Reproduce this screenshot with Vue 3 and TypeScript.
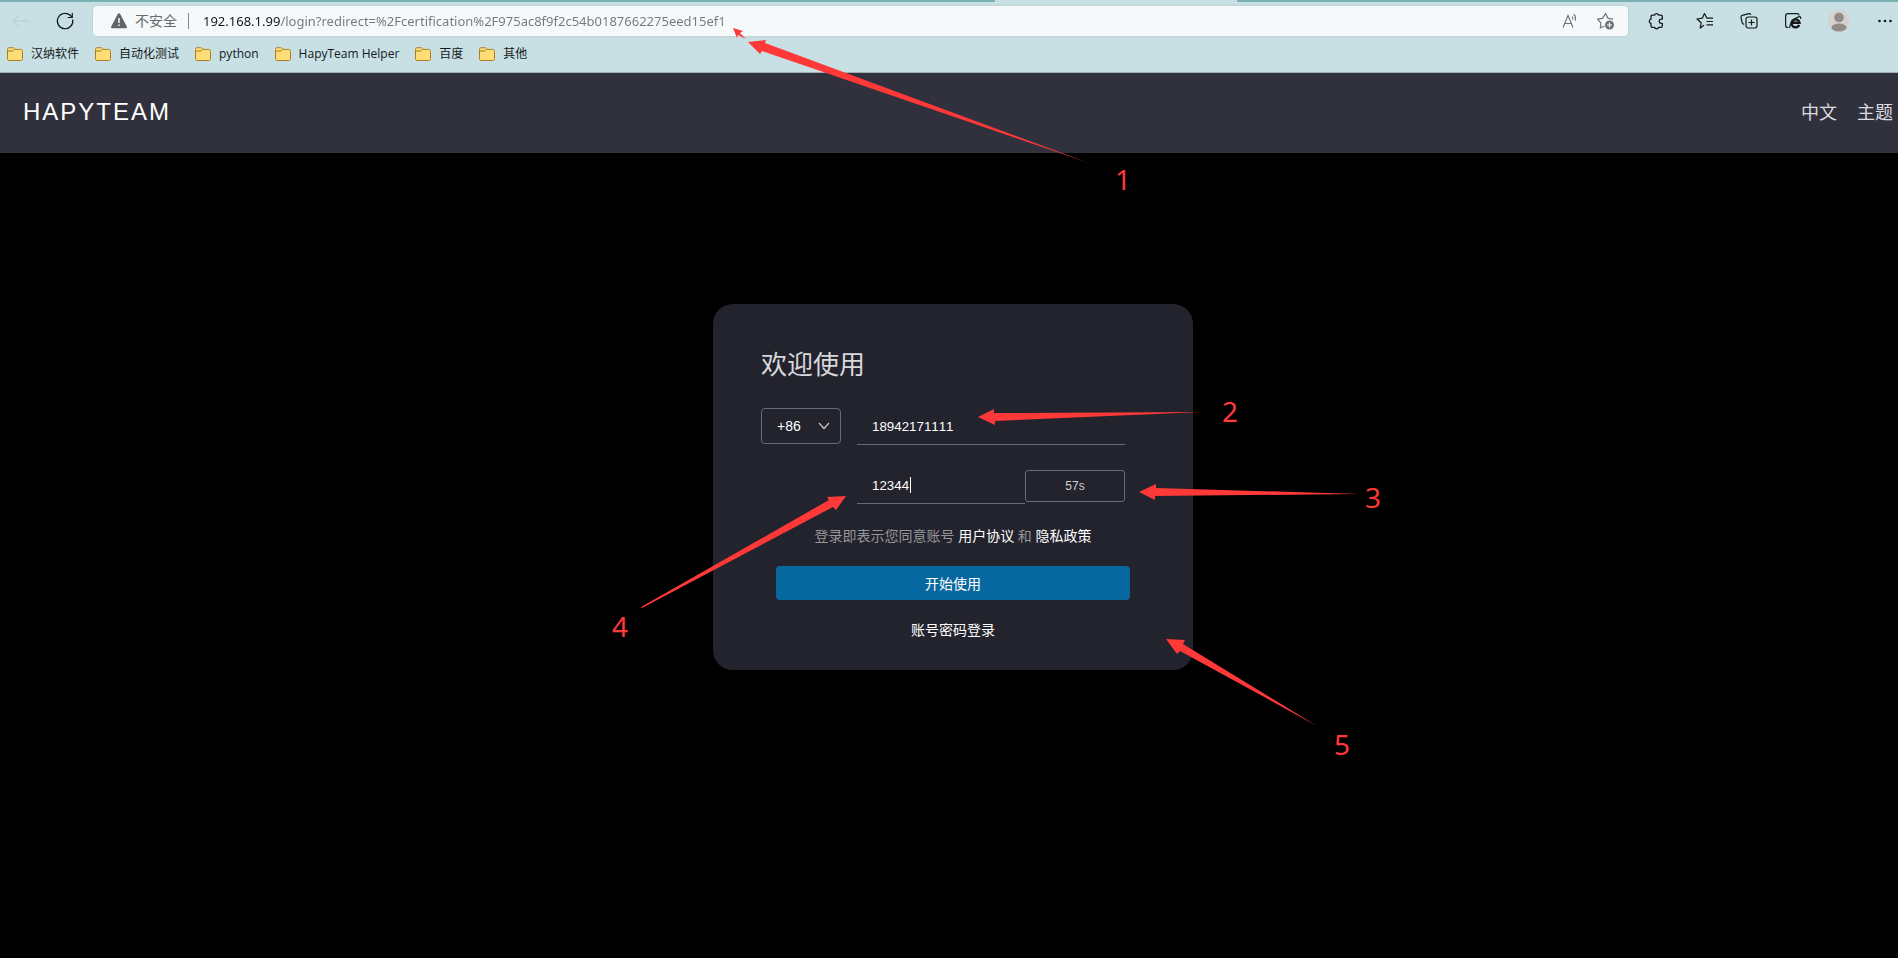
<script setup lang="ts">
import { ref } from 'vue'

interface Arrow {
  id: string
  points: string
}

interface Mark {
  label: string
  x: number
  y: number
}

const url = ref('192.168.1.99/login?redirect=%2Fcertification%2F975ac8f9f2c54b0187662275eed15ef1')
const bookmarks: string[] = ['汉纳软件', '自动化测试', 'python', 'HapyTeam Helper', '百度', '其他']

const areaCode = ref('+86')
const phone = ref('18942171111')
const code = ref('12344')
const secondsLeft = ref(57)

const arrows: Arrow[] = [
  { id: 'url', points: '748,42 766,40 765,43 1089,163 762,51 760,54' },
  { id: 'url-end', points: '733,28 743,31 740,33 746,39 738,35 737,38' },
  { id: 'phone', points: '978,417 994,409 994,413 1202,412 995,421 995,425' },
  { id: 'countdown', points: '1139,492 1156,484 1156,488 1360,494 1155,496 1155,500' },
  { id: 'code', points: '846,496 827,497 829,500 641,607 642,608 833,507 836,510' },
  { id: 'card', points: '1166,639 1185,640 1183,644 1317,726 1180,651 1177,654' },
]

const marks: Mark[] = [
  { label: '1', x: 1123, y: 190 },
  { label: '2', x: 1230, y: 422 },
  { label: '3', x: 1373, y: 508 },
  { label: '4', x: 620, y: 637 },
  { label: '5', x: 1342, y: 755 },
]
</script>

<template>
  <div class="screen">
    <div class="browser">
      <div class="tab-strip">
        <span class="strip-left"></span>
        <span class="strip-active"></span>
        <span class="strip-right"></span>
      </div>
      <div class="toolbar">
        <div class="nav">
          <button class="icon-btn back" type="button" aria-label="后退" disabled>
            <svg width="20" height="20" viewBox="0 0 20 20" fill="none" stroke="currentColor"><path d="M19 10H2M8.500 4L2 10l6.500 6" /></svg>
          </button>
          <button class="icon-btn" type="button" aria-label="刷新">
            <svg width="20" height="20" viewBox="0 0 20 20" fill="none" stroke="currentColor" stroke-width="1.200">
              <path d="M17.600 8.500A7.700 7.700 0 1 1 15.200 4.300L17 6" />
              <path d="M17.300 2v4.500h-4.600" />
            </svg>
          </button>
        </div>
        <div class="address">
          <svg class="warn" width="18" height="18" viewBox="0 0 18 18">
            <path d="M9 1.200c.5 0 .9.200 1.200.7l6.600 12.500c.5.900-.1 1.900-1.200 1.900H2.400c-1.100 0-1.700-1-1.200-1.900L7.800 1.900c.3-.5.700-.7 1.200-.7z" fill="#5f6466" />
            <path d="M9 6v5M9 12.500v1.600" stroke="#f5f9fa" stroke-width="1.500" />
          </svg>
          <span class="insecure">不安全</span>
          <span class="bar"></span>
          <input v-model="url" class="url" type="text" aria-label="地址" spellcheck="false" />
          <button class="icon-btn grey read" type="button" aria-label="朗读">
            <svg width="18" height="18" viewBox="0 0 18 18" fill="none" stroke="currentColor" stroke-width="1.100">
              <path d="M2 15.500L7 3.500l5 12M3.700 11.500h6.600" />
              <path d="M11 4.500c.8.900 1 2 .8 3.200M12.800 2.200c1.700 1.900 2.100 4.200 1.500 6.400" />
            </svg>
          </button>
          <button class="icon-btn grey fav" type="button" aria-label="收藏">
            <svg width="20" height="20" viewBox="0 0 20 20" fill="none" stroke="currentColor" stroke-width="1.200" stroke-linejoin="round">
              <path d="M8.500 15L4.300 17l.6-5.200L1.500 8.200l5-.8L9.500 2.500l2.600 4.900 5 .8" />
              <circle cx="13.500" cy="14" r="4.500" fill="currentColor" stroke="none" />
              <path d="M13.500 11.500v5M11 14h5" stroke="#f5f9fa" />
            </svg>
          </button>
        </div>
        <div class="tools">
          <button class="icon-btn tool" type="button" aria-label="扩展">
            <svg width="20" height="20" viewBox="0 0 20 20" fill="none" stroke="currentColor" stroke-width="1.300" stroke-linejoin="round">
              <path d="M5 5.500c0-.8.500-1.300 1.300-1.300h2.200a2.200 2.200 0 0 1 4.200 0H15c.8 0 1.300.5 1.300 1.300v2.700h-1a2 2 0 0 0 0 4.100h1V15c0 .8-.5 1.300-1.300 1.300h-2.300a2.200 2.200 0 0 1-4.200 0H6.300C5.500 16.300 5 15.800 5 15v-2.500a2.200 2.200 0 0 1 0-4.300z" />
            </svg>
          </button>
          <span class="split"></span>
          <button class="icon-btn tool" type="button" aria-label="收藏夹">
            <svg width="20" height="20" viewBox="0 0 20 20" fill="none" stroke="currentColor" stroke-width="1.200" stroke-linejoin="round">
              <path d="M9 14.300L5.200 17l1-5.300L2 8l5.300-.8L9.500 2.500l2.400 4.700H18M11.500 10.500H18M11.500 13.800H18" />
            </svg>
          </button>
          <button class="icon-btn tool" type="button" aria-label="集锦">
            <svg width="20" height="20" viewBox="0 0 20 20" fill="none" stroke="currentColor" stroke-width="1.200">
              <path d="M5 13.500L3.300 12.200 2 6.300c-.2-.9.300-1.700 1.200-1.900L10 2.700c.9-.2 1.600.2 1.900 1.200" />
              <rect x="7" y="6" width="11" height="11" rx="2.200" />
              <path d="M12.500 8.500v6M9.500 11.500h6" />
            </svg>
          </button>
          <button class="icon-btn tool" type="button" aria-label="兼容模式">
            <svg width="20" height="20" viewBox="0 0 20 20" fill="none" stroke="currentColor" stroke-width="1.200">
              <path d="M5.500 16.500H5c-1.500 0-2.400-.8-2.400-2.300V5c0-1.500.8-2.300 2.300-2.300h9c1.300 0 2.200.6 2.300 1.800" />
              <path d="M16.200 14a4 4 0 1 1 .3-2.300H9" stroke-width="2.400" />
              <path d="M7 17c-1.500-2.700 4.500-10.300 9-11.300 1.800-.2 2 .8 1.500 2.200" />
            </svg>
          </button>
          <button class="icon-btn avatar" type="button" aria-label="用户">
            <svg width="22" height="22" viewBox="0 0 22 22">
              <circle cx="11" cy="11" r="11" fill="#d5d1cf" />
              <circle cx="11" cy="7.500" r="4.800" fill="#918a87" />
              <ellipse cx="11" cy="17.500" rx="7.500" ry="4" fill="#918a87" />
            </svg>
          </button>
          <button class="icon-btn more" type="button" aria-label="更多">
            <svg width="16" height="16" viewBox="0 0 16 16" fill="currentColor">
              <circle cx="2.500" cy="8" r="1.300" /><circle cx="8" cy="8" r="1.300" /><circle cx="13.500" cy="8" r="1.300" />
            </svg>
          </button>
        </div>
      </div>
      <nav class="bookmarks">
        <a v-for="name in bookmarks" :key="name" class="bookmark" href="#">
          <svg width="16" height="16" viewBox="0 0 16 16">
            <path d="M.5 3.500c0-1 .6-1.800 1.700-1.800h3.300c.7 0 1.200.3 1.700.8l.8.900h5.800c1 0 1.700.6 1.700 1.700v7.700c0 1-.6 1.700-1.700 1.700H2.200c-1 0-1.700-.6-1.700-1.700z" fill="#fedc77" stroke="#a9801c" />
            <path d="M.8 5h4.400c.6 0 1-.2 1.400-.6l1-1" fill="none" stroke="#a9801c" />
          </svg>
          <span>{{ name }}</span>
        </a>
      </nav>
    </div>

    <header class="header">
      <div class="brand">HAPYTEAM</div>
      <div class="links">
        <button class="link" type="button">中文</button>
        <button class="link" type="button">主题</button>
      </div>
    </header>

    <main class="content">
      <form class="card" @submit.prevent>
        <h1 class="title">欢迎使用</h1>
        <div class="fields">
          <div class="select-wrap">
            <select v-model="areaCode" class="area" aria-label="区号">
              <option>+86</option>
            </select>
            <svg class="chevron" width="12" height="12" viewBox="0 0 12 12" fill="none" stroke="#c5c5ca" stroke-width="1.200"><path d="M1 3l5 5.500L11 3" /></svg>
          </div>
          <input v-model="phone" class="field" type="text" aria-label="手机号" />
          <div class="code-row">
            <div class="field code">
              <input v-model="code" class="code-input" type="text" aria-label="验证码" />
              <span class="caret"></span>
            </div>
            <button class="countdown" type="button">{{ secondsLeft }}s</button>
          </div>
        </div>
        <p class="terms">登录即表示您同意账号 <a href="#">用户协议</a> 和 <a href="#">隐私政策</a></p>
        <button class="submit" type="submit">开始使用</button>
        <a class="alt" href="#">账号密码登录</a>
      </form>
    </main>

    <svg class="notes" aria-hidden="true">
      <polygon v-for="arrow in arrows" :key="arrow.id" :points="arrow.points" />
      <text v-for="mark in marks" :key="mark.label" :x="mark.x" :y="mark.y">{{ mark.label }}</text>
    </svg>
  </div>
</template>

<style>
body {
  background: #000;
}
</style>

<style scoped>
.screen,
.screen * {
  box-sizing: border-box;
}
.screen {
  position: relative;
  min-height: 100vh;
  display: flex;
  flex-direction: column;
  overflow: hidden;
  background: #000;
  font-family: "Noto Sans", "Noto Sans CJK SC", sans-serif;
}
button {
  padding: 0;
  border: 0;
  background: none;
  color: inherit;
  font-family: inherit;
}
svg {
  display: block;
  flex: none;
}
a {
  text-decoration: none;
}
.browser {
  background: #c8dfe3;
  border-bottom: 1px solid #a0b0b6;
}
.tab-strip {
  display: flex;
  height: 2px;
}
.strip-left {
  flex: 995;
  background: #79b1b3;
}
.strip-active {
  flex: 242;
}
.strip-right {
  flex: 661;
  background: #79b1b3;
}
.toolbar {
  display: flex;
  align-items: center;
  height: 38px;
}
.nav {
  display: flex;
  gap: 24px;
  width: 93px;
  padding-left: 11px;
}
.icon-btn {
  display: flex;
  flex: none;
  align-items: center;
  justify-content: center;
  color: #15191b;
}
.back {
  color: #b5cbd0;
}
.address {
  flex: 1;
  display: flex;
  align-items: center;
  min-width: 0;
  height: 30px;
  padding: 0 12px 0 17px;
  border-radius: 4px;
  background: #f5f9fa;
  box-shadow: 0 0 2px #a9bcc1;
}
.insecure {
  margin-left: 7px;
  font-size: 14px;
  line-height: 20px;
  color: #666b6d;
}
.bar {
  width: 1px;
  height: 16px;
  margin: 0 14px 0 11px;
  background: #85898b;
}
.url {
  flex: 1;
  min-width: 0;
  padding: 0;
  border: 0;
  outline: 0;
  font-family: "Noto Sans", sans-serif;
  font-size: 13px;
  line-height: 20px;
  color: transparent;
  background: linear-gradient(to right, #15191b 77px, #74787a 77px);
  background-clip: text;
}
.grey {
  color: #6d7173;
}
.fav {
  margin-left: 17px;
}
.tools {
  display: flex;
  align-items: center;
  width: 270px;
  padding-left: 6px;
}
.tool {
  width: 44px;
}
.split {
  width: 1px;
  height: 16px;
  margin: 0 3px 0 2px;
  background: #9db1b6;
}
.avatar {
  width: 48px;
}
.more {
  width: 44px;
}
.bookmarks {
  display: flex;
  gap: 16px;
  height: 32px;
  padding: 5px 7px 0;
}
.bookmark {
  display: flex;
  gap: 8px;
  height: 18px;
  align-items: center;
  font-family: "Open Sans", "Noto Sans CJK SC", sans-serif;
  font-size: 12px;
  line-height: 18px;
  color: #15191b;
}
.header {
  display: flex;
  align-items: center;
  justify-content: space-between;
  height: 80px;
  padding: 0 5px 2px 23px;
  background: #31313d;
}
.brand {
  font-family: "Liberation Sans", Arial, sans-serif;
  font-size: 24px;
  letter-spacing: 2px;
  color: #fff;
}
.links {
  display: flex;
  gap: 20px;
}
.link {
  font-size: 18px;
  line-height: 24px;
  color: #dcdce0;
}
.content {
  display: flex;
  justify-content: center;
  padding: 151px 0 40px 8px;
}
.card {
  display: flex;
  flex-direction: column;
  width: 480px;
  padding: 40px 48px 30px;
  border-radius: 20px;
  background: #23232d;
}
.title {
  margin: 0 0 24px;
  font-size: 26px;
  line-height: 40px;
  font-weight: 400;
  color: #d8d8dc;
}
.fields {
  display: grid;
  grid-template-columns: 80px 1fr;
  column-gap: 16px;
  row-gap: 22px;
  margin-right: 20px;
}
.select-wrap {
  position: relative;
}
.area {
  width: 100%;
  height: 36px;
  padding: 0 15px;
  border: 1px solid #6b6b75;
  border-radius: 4px;
  appearance: none;
  background: none;
  color: #fff;
  font-family: "Liberation Sans", Arial, sans-serif;
  font-size: 14px;
}
.chevron {
  position: absolute;
  right: 11px;
  top: 12px;
  pointer-events: none;
}
.field {
  width: 100%;
  height: 37px;
  padding: 0 15px;
  border: 0;
  border-bottom: 1px solid #6b6b75;
  outline: 0;
  background: none;
  color: #fff;
  font-family: "Liberation Sans", Arial, sans-serif;
  font-kerning: none;
}
.code-row {
  grid-column: 2;
  display: flex;
}
.code {
  position: relative;
  display: flex;
  flex: 1;
  align-items: center;
}
.code-input {
  width: 100%;
  padding: 0;
  border: 0;
  outline: 0;
  background: none;
  color: #fff;
  font-family: "Liberation Sans", Arial, sans-serif;
}
.caret {
  position: absolute;
  left: 53px;
  top: 10px;
  width: 1px;
  height: 16px;
  background: #fff;
}
.countdown {
  width: 100px;
  height: 32px;
  margin-top: 3px;
  border: 1px solid #6b6b75;
  border-radius: 3px;
  color: #d0d0d6;
  font-family: "Liberation Sans", Arial, sans-serif;
  font-size: 12px;
}
.terms {
  margin: 22px 0 20px;
  font-size: 14px;
  line-height: 20px;
  text-align: center;
  color: #95959a;
}
.terms a,
.alt {
  color: #fff;
}
.submit {
  height: 34px;
  margin: 0 15px;
  border-radius: 4px;
  background: #07689f;
  font-size: 14px;
  color: #fff;
}
.alt {
  align-self: center;
  margin-top: 20px;
  font-size: 14px;
  line-height: 20px;
}
.notes {
  position: absolute;
  inset: 0;
  width: 100%;
  height: 100%;
  fill: #ff3838;
  pointer-events: none;
}
.notes text {
  font-size: 28px;
  text-anchor: middle;
}
</style>
